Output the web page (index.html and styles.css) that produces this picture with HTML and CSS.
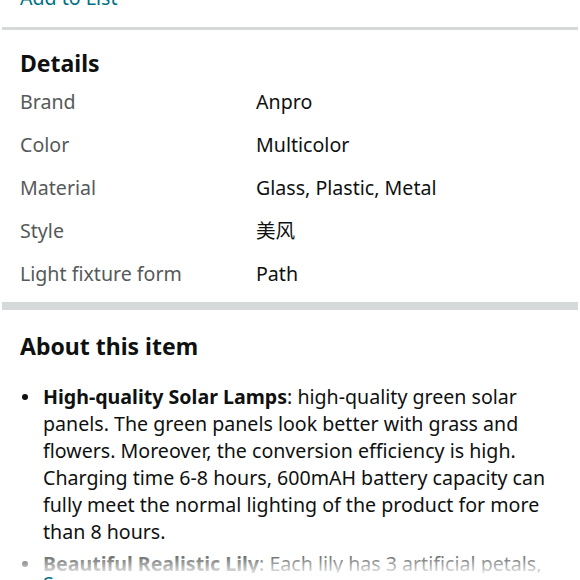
FILE: index.html
```html
<!DOCTYPE html>
<html>
<head>
<meta charset="utf-8">
<link rel="stylesheet" href="styles.css">
</head>
<body>
<div class="top"><a class="link add">Add to List</a></div>
<div class="rule thin"></div>
<section class="details">
  <h2 class="title">Details</h2>
  <div class="grid">
    <div class="label">Brand</div><div class="value">Anpro</div>
    <div class="label">Color</div><div class="value">Multicolor</div>
    <div class="label">Material</div><div class="value">Glass, Plastic, Metal</div>
    <div class="label">Style</div><div class="value">美风</div>
    <div class="label">Light fixture form</div><div class="value">Path</div>
  </div>
</section>
<div class="rule thick"></div>
<section class="about">
  <h2 class="title">About this item</h2>
  <div class="clip">
    <ul class="bullets">
      <li><b>High-quality Solar Lamps</b>: high-quality green solar panels. The green panels look better with grass and flowers. Moreover, the conversion efficiency is high. Charging time 6-8 hours, 600mAH battery capacity can fully meet the normal lighting of the product for more than 8 hours.</li>
      <li><b>Beautiful Realistic Lily</b>: Each lily has 3 artificial petals, which look very realistic and bright in the garden.</li>
    </ul>
    <div class="fade"></div>
  </div>
  <a class="link more">See more</a>
</section>
</body>
</html>
```
FILE: styles.css
```css
html, body {
  margin: 0;
  padding: 0;
  background: #fff;
  font-family: "Noto Sans", "Noto Sans CJK SC", sans-serif;
  color: #0f1111;
}
.link { color: #007185; text-decoration: none; }
.top {
  height: 27px;
  padding-left: 20px;
  overflow: hidden;
}
.add {
  display: block;
  font-size: 19.6px;
  line-height: 20px;
  margin-top: -12px;
}
.rule { margin: 0 2px; background: #d5d9d9; }
.thin { height: 3px; }
.thick { height: 8px; }
.details { padding: 19px 20px 7px; }
.title {
  margin: 0;
  font-size: 23px;
  font-weight: 700;
  line-height: 28px;
}
.grid {
  display: grid;
  grid-template-columns: 236px 1fr;
  grid-auto-rows: 43px;
  margin-top: 3px;
  font-size: 19.6px;
  line-height: 43px;
}
.label { color: #565959; }
.value { color: #0f1111; }
.about { padding: 22px 20px 0; }
.clip {
  position: relative;
  height: 190px;
  overflow: hidden;
  margin-top: 23px;
}
.bullets {
  margin: 0;
  padding: 0 0 0 23px;
  font-size: 19.6px;
  line-height: 27px;
  list-style: none;
}
.bullets li { margin-bottom: 5px; position: relative; }
.bullets li::before {
  content: "";
  position: absolute;
  left: -21px;
  top: 11px;
  width: 6px;
  height: 6px;
  border-radius: 50%;
  background: currentColor;
}
.fade {
  position: absolute;
  left: 0; right: 0; bottom: 0;
  height: 30px;
  background: linear-gradient(to bottom, rgba(255,255,255,0), rgba(255,255,255,0.88));
}
.more {
  display: block;
  font-size: 19.6px;
  line-height: 22px;
  padding-left: 23px;
}
```
